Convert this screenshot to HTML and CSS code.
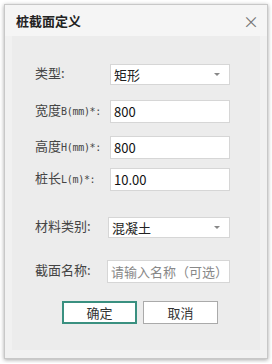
FILE: index.html
```html
<!DOCTYPE html>
<html lang="zh">
<head>
    <meta charset="UTF-8">
    <title>桩截面定义</title>
    <link rel="stylesheet" href="styles.css">
</head>
<body>
    <div class="dialog">
        <div class="dialog-head">
            <span class="dialog-title">桩截面定义</span>
            <span class="dialog-close">×</span>
        </div>
        <div class="dialog-body">
            <div class="form-row row-type">
                <label class="form-label">类型:</label>
                <div class="field select-field">矩形<i class="caret"></i></div>
            </div>
            <div class="form-row row-b">
                <label class="form-label">宽度<span class="mono">B(mm)*:</span></label>
                <div class="field">800</div>
            </div>
            <div class="form-row row-h">
                <label class="form-label">高度<span class="mono">H(mm)*:</span></label>
                <div class="field">800</div>
            </div>
            <div class="form-row row-l">
                <label class="form-label">桩长<span class="mono">L(m)*:</span></label>
                <div class="field">10.00</div>
            </div>
            <div class="form-row row-mat">
                <label class="form-label label-mid">材料类别:</label>
                <div class="field select-field">混凝土<i class="caret"></i></div>
            </div>
            <div class="form-row row-name">
                <label class="form-label label-short">截面名称:</label>
                <div class="field placeholder">请输入名称（可选）</div>
            </div>
            <div class="btn-row">
                <button class="btn btn-ok">确定</button>
                <button class="btn">取消</button>
            </div>
        </div>
    </div>
</body>
</html>
```

FILE: styles.css
```css
body{
    margin: 0;
    background: #ffffff;
    font-family: "Noto Sans CJK SC", "Noto Sans", sans-serif;
    color: #333;
}
.dialog{
    margin: 4px;
    width: 262px;
    height: 353px;
    border: 1px solid #c8c8c8;
    background: #f1f1f1;
    box-shadow: 0 1px 4px rgba(0, 0, 0, 0.35);
    display: flex;
    flex-direction: column;
}
.dialog-head{
    height: 31px;
    background: #f5f5f5;
    display: flex;
    align-items: center;
    justify-content: space-between;
    padding: 0 8px 0 11px;
}
.dialog-title{
    font-size: 13px;
    font-weight: 700;
    color: #222;
}
.dialog-close{
    font-size: 16px;
    color: #777;
    line-height: 1;
}
.dialog-body{
    margin: 0 7px 8px 7px;
    flex: 1;
    background: #ececec;
    padding: 28px 30px 0 23px;
    display: flex;
    flex-direction: column;
}
.form-row{
    display: flex;
    align-items: center;
}
.form-label{
    width: 75px;
    flex-shrink: 0;
    white-space: nowrap;
    font-size: 13px;
    color: #444;
    margin-top: -4px;
}
.mono{
    font-family: "DejaVu Sans Mono", monospace;
    font-size: 10px;
    letter-spacing: -0.3px;
}
.label-mid{
    width: 73px;
}
.label-short{
    width: 72px;
}
.field{
    flex: 1;
    height: 21px;
    border: 1px solid #d6d6d6;
    background: #fff;
    font-size: 13px;
    line-height: 21px;
    padding: 0 3px;
    color: #111;
    display: flex;
    align-items: center;
    justify-content: space-between;
}
.select-field{
    height: 19px;
    color: #222;
}
.placeholder{
    color: #888;
}
.caret{
    width: 0;
    height: 0;
    border-left: 3px solid transparent;
    border-right: 3px solid transparent;
    border-top: 3px solid #888;
    margin-right: 6px;
}
.row-b{ margin-top: 15px; }
.row-h{ margin-top: 13px; }
.row-l{ margin-top: 9px; }
.row-mat{ margin-top: 26px; }
.row-name{ margin-top: 22px; }
.btn-row{
    margin-top: 18px;
    display: flex;
    gap: 6px;
    padding-left: 27px;
}
.btn{
    width: 75px;
    height: 23px;
    background: #fff;
    border: 1px solid #aaa;
    font-family: "Noto Sans CJK SC", "Noto Sans", sans-serif;
    font-size: 13px;
    color: #333;
    padding: 0;
}
.btn-ok{
    border: 2px solid #3a9080;
}
```
